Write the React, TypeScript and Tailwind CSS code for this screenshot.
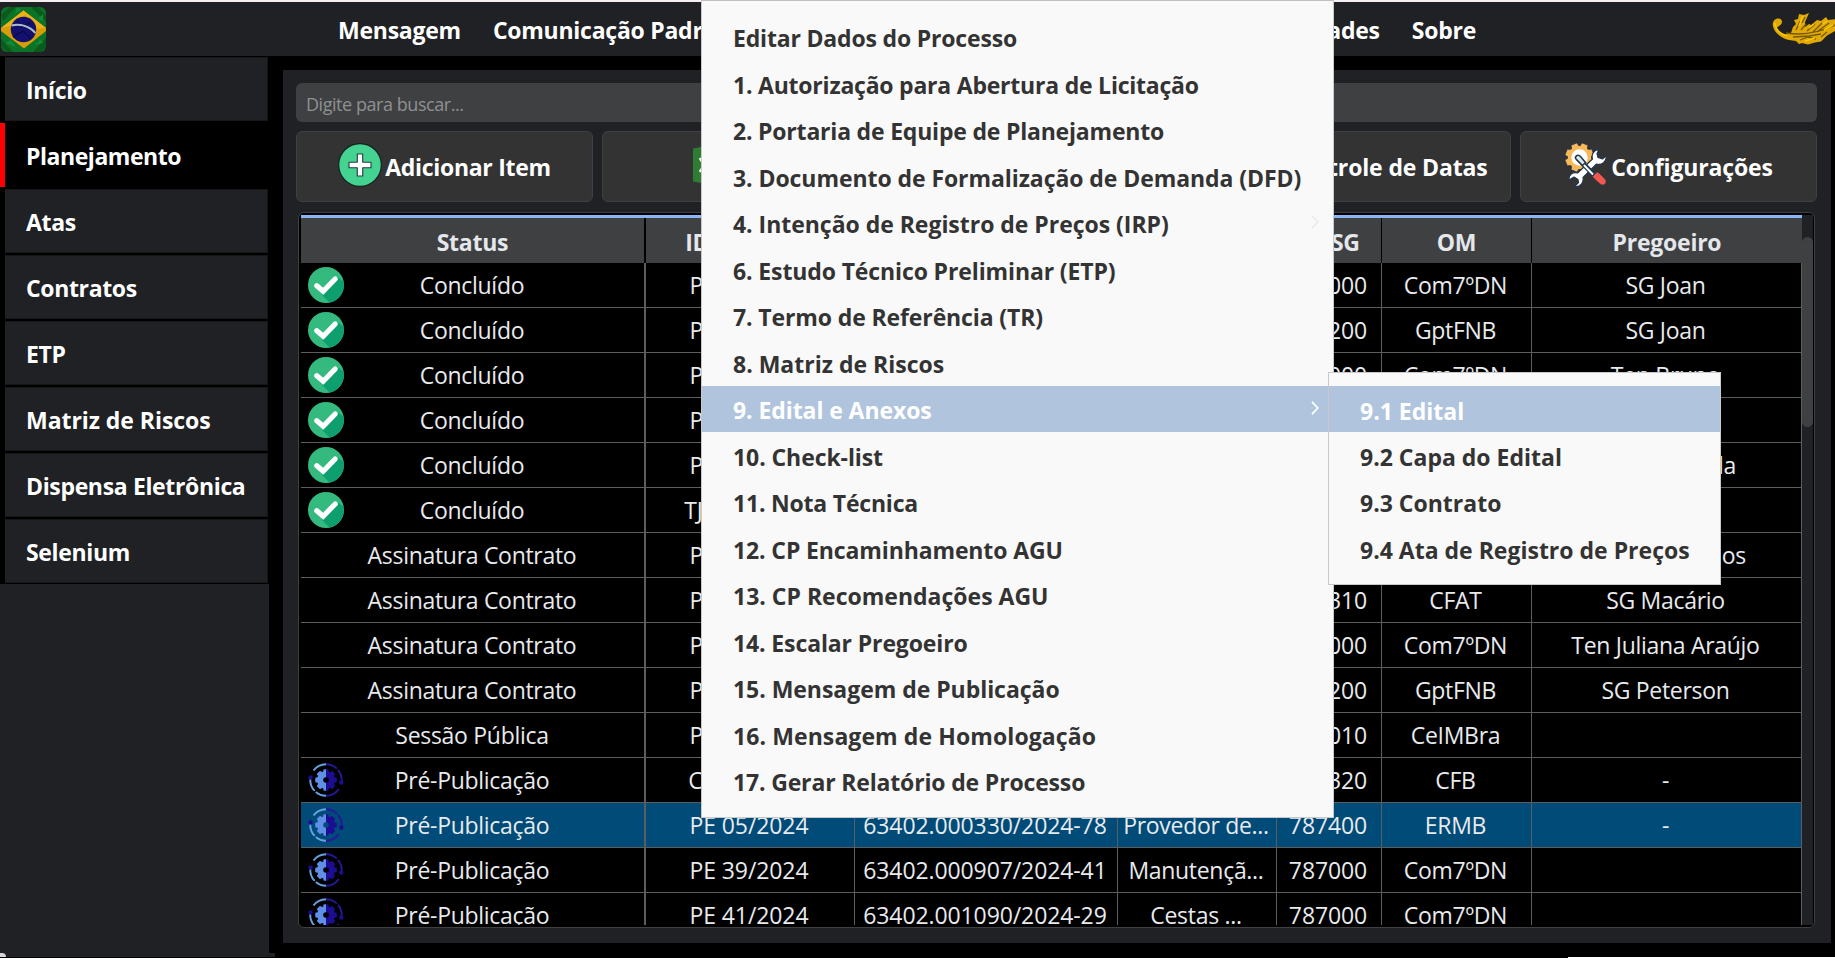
import React from "react";

const sidebar = ["Início", "Planejamento", "Atas", "Contratos", "ETP", "Matriz de Riscos", "Dispensa Eletrônica", "Selenium"];

const menu: [string, string][] = [
  ["Editar Dados do Processo", "tracking-[-0.18px]"],
  ["1. Autorização para Abertura de Licitação", "tracking-[-0.22px]"],
  ["2. Portaria de Equipe de Planejamento", "tracking-[-0.2px]"],
  ["3. Documento de Formalização de Demanda (DFD)", "tracking-[-0.07px]"],
  ["4. Intenção de Registro de Preços (IRP)", "tracking-[-0.03px]"],
  ["6. Estudo Técnico Preliminar (ETP)", "tracking-[-0.12px]"],
  ["7. Termo de Referência (TR)", "tracking-[-0.12px]"],
  ["8. Matriz de Riscos", "tracking-[0px]"],
  ["9. Edital e Anexos", "tracking-[-0.08px]"],
  ["10. Check-list", "tracking-[-0.08px]"],
  ["11. Nota Técnica", "tracking-[-0.2px]"],
  ["12. CP Encaminhamento AGU", "tracking-[-0.12px]"],
  ["13. CP Recomendações AGU", "tracking-[0px]"],
  ["14. Escalar Pregoeiro", "tracking-[-0.12px]"],
  ["15. Mensagem de Publicação", "tracking-[-0.04px]"],
  ["16. Mensagem de Homologação", "tracking-[0.09px]"],
  ["17. Gerar Relatório de Processo", "tracking-[-0.16px]"],
];

const submenu = ["9.1 Edital", "9.2 Capa do Edital", "9.3 Contrato", "9.4 Ata de Registro de Preços"];

const headers = ["Status", "ID Processo", "NUP", "Objeto", "UASG", "OM", "Pregoeiro"];

const rows: string[][] = [
  ["Concluído", "PE 01/2024", "", "", "787000", "Com7ºDN", "SG Joan"],
  ["Concluído", "PE 02/2024", "", "", "787200", "GptFNB", "SG Joan"],
  ["Concluído", "PE 03/2024", "", "", "787000", "Com7ºDN", "Ten Bruno"],
  ["Concluído", "PE 04/2024", "", "", "", "", ""],
  ["Concluído", "PE 06/2024", "", "", "", "", "Ten Manuella"],
  ["Concluído", "TJIL 07/2024", "", "", "", "", ""],
  ["Assinatura Contrato", "PE 08/2024", "", "", "", "", "Ten João Carlos"],
  ["Assinatura Contrato", "PE 09/2024", "", "", "787310", "CFAT", "SG Macário"],
  ["Assinatura Contrato", "PE 10/2024", "", "", "787000", "Com7ºDN", "Ten Juliana Araújo"],
  ["Assinatura Contrato", "PE 11/2024", "", "", "787200", "GptFNB", "SG Peterson"],
  ["Sessão Pública", "PE 12/2024", "", "", "787010", "CeIMBra", ""],
  ["Pré-Publicação", "CC 01/2024", "", "", "787320", "CFB", "-"],
  ["Pré-Publicação", "PE 05/2024", "63402.000330/2024-78", "Provedor de...", "787400", "ERMB", "-"],
  ["Pré-Publicação", "PE 39/2024", "63402.000907/2024-41", "Manutençã...", "787000", "Com7ºDN", ""],
  ["Pré-Publicação", "PE 41/2024", "63402.001090/2024-29", "Cestas ...", "787000", "Com7ºDN", ""],
];

const GRID = "grid grid-cols-[345px_209px_263px_159px_105px_150px_270px]";

function FlagIcon() {
  return (
    <svg viewBox="0 0 45 45" className="size-[45px]">
      <defs>
        <clipPath id="flag"><rect width="45" height="45" rx="6" /></clipPath>
      </defs>
      <g clipPath="url(#flag)">
        <rect width="45" height="45" fill="#0b7327" />
        <path d="M0 8 9 0h6L2 14zM30 0h7l8 9v6zM0 32l12 13H6L0 39zM45 31 32 45h8l5-5z" fill="#0a5a1c" />
        <path d="M16 0l4 3-6 4zM4 36l6-3 5 7zM34 38l6-6 2 4zM37 12l5-5v7z" fill="#12893a" />
        <path d="M22.500 3.500 45 21v3L23 41.500 0 24v-3z" fill="#d99d0a" />
        <path d="M22.500 3.500 45 21 35 22 24 8 10 19 0 21z" fill="#eab216" />
        <circle cx="22.500" cy="22.500" r="12.700" fill="#14106f" />
        <path d="M12 30l10-6 8 8M16 14l5 6 8-4" stroke="#0b0a4c" strokeWidth="1.500" fill="none" />
        <path d="M10.500 18.500c9-2 18 1 24 7.500" stroke="#a9bcc4" strokeWidth="2" fill="none" />
      </g>
    </svg>
  );
}

function DragonIcon() {
  return (
    <svg viewBox="0 0 65 34" className="h-[34px] w-[65px]" fill="none">
      <path d="M10 13.500C12 11 11 7.500 7.500 7.500 3 7.500 1 11.500 2 15.500 4 23 11 27 18 29l7 1 3 3 3-1 6 1.500 7-2 6-1 6-6 9-5V8l-8 1-2-3-5 4-4-1-6 5-2-1-4 3 0-5 4-9-5 2-5-1-1 5-4 1 2 4-3 3-2 6c-4 2-8 1.500-11-.5-2-1.500-4-3.500-3-5z" fill="#e0a906" />
      <path d="M15 22c12 2 30 1 49-8M25 19l4-9M30 19l5-6M36 20l8-7M42 21l9-9M47 20l11-8M22 26l16-1 12-2M29 29l8-3 8 2M50 26l6-5M31 12l3-6" stroke="#775a04" strokeWidth="1.300" />
      <path d="M28 15l4-10M38 17l5-4M52 13l4-3M34 30l10-3M4 12c0 6 5 11 12 13M53 19l9-5" stroke="#f8c900" strokeWidth="1.500" />
    </svg>
  );
}

function PlusIcon() {
  return (
    <svg viewBox="0 0 44 44" className="size-11 shrink-0">
      <circle cx="22" cy="22" r="21.300" fill="#44d391" stroke="#16231d" strokeWidth="1.200" />
      <path d="M19.300 11h5.400v8.300H33v5.400h-8.300V33h-5.400v-8.300H11v-5.400h8.300z" fill="#fff" stroke="#2b3a44" strokeWidth="1.100" strokeLinejoin="round" />
    </svg>
  );
}

function ExcelIcon() {
  return (
    <svg viewBox="0 0 42 42" className="size-[42px] shrink-0">
      <path d="M0 4.500 24 0v42L0 37.500z" fill="#2e7d32" />
      <path d="M24 6h17v30H24z" fill="#fff" stroke="#2e7d32" />
      <path d="M7 14l9 14M16 14 7 28" stroke="#fff" strokeWidth="3" />
    </svg>
  );
}

function CalendarIcon() {
  return (
    <svg viewBox="0 0 44 44" className="size-11 shrink-0">
      <rect x="3" y="6" width="38" height="35" rx="4" fill="#f3f6f8" />
      <path d="M3 16V10a4 4 0 0 1 4-4h30a4 4 0 0 1 4 4v6z" fill="#e5534b" />
    </svg>
  );
}

function ToolsIcon() {
  const teeth = [0, 45, 90, 135, 180, 225, 270, 315];
  return (
    <svg viewBox="0 0 44 44" className="size-11 shrink-0">
      <g transform="translate(15.500 14.500)">
        {teeth.map((a) => (
          <path key={a} d="M-3.200 -14.500h6.400l1 5h-8.400z" fill="#f9b857" stroke="#21354d" strokeWidth=".7" transform={`rotate(${a + 22.5})`} />
        ))}
        <circle r="11.600" fill="#f9b857" />
        <circle r="8.200" fill="#fff" />
      </g>
      <path d="M35 6.500c-5 0-8 5-6.500 9.500L13.500 30c-5-1.500-9 2-8.500 7l5-3 4 2.500.500 3-4 4c6 1 9.500-4 8.500-9l13.500-13.500c5 1.500 9.500-1.500 10-8.500l-4 3.500-4.500-1.500-1-4z" fill="#fff" stroke="#21354d" strokeWidth="1.200" strokeLinejoin="round" />
      <path d="M14 15.500l16 16.500" stroke="#21354d" strokeWidth="5" strokeLinecap="round" />
      <path d="M17 19l12 12.500" stroke="#fff" strokeWidth="1.900" />
      <path d="M11.500 15.500c-.5-3 3-4.500 5-2l5 6-3 3z" fill="#dfe7ee" stroke="#21354d" strokeWidth="1.500" />
      <path d="M28.500 33.500l4.500-4.500 2 1 6 6c3 3.500-1 8-5 5l-6-5.500z" fill="#f0584f" stroke="#21354d" strokeWidth=".6" />
    </svg>
  );
}

function CheckIcon() {
  return (
    <svg viewBox="0 0 36 36" className="size-9">
      <circle cx="18" cy="18" r="18" fill="#34b97f" />
      <path d="M30.500 10.500 35.500 15A18 18 0 0 1 21.500 35.600L14 28z" fill="#0d9f6e" />
      <path d="M8.800 18.800l6.400 5.400L27.200 12" stroke="#fff" strokeWidth="5.200" fill="none" strokeLinecap="round" strokeLinejoin="miter" />
    </svg>
  );
}

function GearIcon() {
  const teeth = [0, 45, 90, 135, 180, 225, 270, 315];
  const gear = (
    <>
      {teeth.map((a) => (
        <rect key={a} x="-2.600" y="-10.800" width="5.200" height="5" rx="1" transform={`rotate(${a})`} />
      ))}
      <path fillRule="evenodd" d="M0-9a9 9 0 1 1 0 18 9 9 0 1 1 0-18zM0-2.800a2.800 2.800 0 1 0 0 5.600 2.800 2.800 0 1 0 0-5.600z" />
    </>
  );
  return (
    <svg viewBox="-18 -18 36 36" className="size-9">
      <defs>
        <clipPath id="half-l"><rect x="-18" y="-18" width="18" height="36" /></clipPath>
        <clipPath id="half-r"><rect x="0" y="-18" width="18" height="36" /></clipPath>
      </defs>
      <g clipPath="url(#half-l)" fill="#5f8fe6">{gear}</g>
      <g clipPath="url(#half-r)" fill="#1c0d93">{gear}</g>
      <g fill="none" strokeWidth="1.900">
        <path d="M0-15.800A15.800 15.800 0 0 0-12.500-9.500" stroke="#66a3e0" />
        <path d="M-15.600-2A15.800 15.800 0 0 0 0 15.800" stroke="#66a3e0" strokeDasharray="14 1.500" />
        <path d="M0-15.800A15.800 15.800 0 0 1 15.600 2" stroke="#24189c" strokeDasharray="12 1.500" />
        <path d="M0 15.800A15.800 15.800 0 0 0 12.800 9" stroke="#24189c" />
      </g>
      <circle cx="-15.500" cy="-2.500" r="2.200" fill="#1c0d93" />
      <circle cx="15.300" cy="2.500" r="2.200" fill="#1c0d93" />
    </svg>
  );
}

function ToolButton({ icon, tracking = "tracking-[-0.15px]", children }: { icon?: React.ReactNode; tracking?: string; children: React.ReactNode }) {
  return (
    <button className="flex h-[71px] flex-1 items-center justify-center gap-[3px] rounded-md border border-[#3f4042] bg-[#333333] text-[23px] font-bold whitespace-nowrap text-white">
      {icon && <span className="-mt-1">{icon}</span>}
      <span className={`pt-0.5 ${tracking}`}>{children}</span>
    </button>
  );
}

function Chevron({ className }: { className: string }) {
  return (
    <svg viewBox="0 0 8 14" className={`mt-[-2px] h-3.5 w-2 ${className}`} fill="none" stroke="currentColor" strokeWidth="1.800">
      <path d="M1 .8 6.800 7 1 13.200" />
    </svg>
  );
}

export default function App() {
  return (
    <div className="relative flex h-[958px] w-[1835px] flex-col overflow-hidden bg-black font-['Open_Sans','Noto_Sans',sans-serif]">
      <div className="h-0.5 shrink-0 bg-[#f5eff2]" />
      <header className="flex h-[54px] shrink-0 items-center bg-[#202124] pl-px">
        <FlagIcon />
        <nav className="ml-[292px] flex w-[1138px] gap-8 pt-0.5 text-[23px] leading-[50px] font-bold tracking-[-0.25px] whitespace-nowrap text-white">
          <span>Mensagem</span>
          <span>Comunicação Padronizada</span>
          <span className="ml-auto">Funcionalidades</span>
          <span>Sobre</span>
        </nav>
        <div className="mr-[-1px] mb-0.5 ml-auto">
          <DragonIcon />
        </div>
      </header>

      <div className="flex min-h-0 flex-1">
        <aside className="flex w-[269px] shrink-0 flex-col bg-[#202124]">
          <ul className="flex flex-col gap-0.5 bg-black pt-px pb-px">
            {sidebar.map((s) => (
              <li
                key={s}
                className={
                  s === "Planejamento"
                    ? "flex h-16 items-center border-l-[5px] border-[#ff0000] bg-black"
                    : "mr-px ml-[5px] flex h-16 items-center border border-[#161719] border-l-[#202124] bg-[#202124]"
                }
              >
                <span className={`pt-[3px] text-[23px] font-bold text-white ${s === "Planejamento" ? "pl-[21px] tracking-[-0.45px]" : "pl-5"} ${s === "Matriz de Riscos" ? "tracking-[-0.05px]" : s === "Planejamento" ? "" : "tracking-[-0.35px]"}`}>
                  {s}
                </span>
              </li>
            ))}
          </ul>
        </aside>

        <main className="mt-3.5 ml-3.5 flex h-[873px] w-[1548px] flex-col bg-[#202124] pt-[13px] pr-3.5 pl-[13px]">
          <div className="flex h-[39px] shrink-0 items-center rounded-md bg-[#3f4042] pt-[3px] pl-2.5 text-[18px] tracking-[-0.45px] text-[#8f9092]">
            Digite para buscar...
          </div>
          <div className="mt-[9px] flex gap-[9px]">
            <ToolButton icon={<PlusIcon />} tracking="tracking-[-0.3px]">Adicionar Item</ToolButton>
            <ToolButton icon={<ExcelIcon />}>Salvar</ToolButton>
            <ToolButton>Relatório</ToolButton>
            <ToolButton icon={<CalendarIcon />}>Controle de Datas</ToolButton>
            <ToolButton icon={<ToolsIcon />}>Configurações</ToolButton>
          </div>

          <section className="mt-2.5 mr-0.5 ml-0.5 flex h-[716px] overflow-hidden rounded-md border border-[#3f4042] bg-black p-0.5 pr-px">
            <div className="w-[1501px] overflow-hidden">
              <div className={`${GRID} h-12 border-t-[3px] border-[#8ab4f8]`}>
                {headers.map((h, i) => (
                  <div
                    key={h}
                    className={`flex items-center justify-center bg-[#3f4042] pt-[3px] text-[23px] font-bold tracking-[-0.25px] text-[#e4e7eb] ${i === 0 ? "border-r-2 border-black" : i < 6 ? "border-r border-black" : ""}`}
                  >
                    {h}
                  </div>
                ))}
              </div>
              {rows.map((r, n) => (
                <div key={n} className={`${GRID} h-[45px] ${n === 12 ? "bg-[#004b78]" : ""}`}>
                  {r.map((c, i) => (
                    <div
                      key={i}
                      className={`flex items-center border-b border-[#5c5d5f] text-[23px] whitespace-nowrap text-[#e8eaed] ${i === 0 ? "border-r-2" : "border-r"} ${i === 2 || i === 4 || i === 1 ? "tracking-[-0.1px]" : "tracking-[-0.3px]"}`}
                    >
                      {i === 0 && (
                        <span className="ml-[7px] w-9">
                          {n < 6 ? <CheckIcon /> : n > 10 ? <GearIcon /> : null}
                        </span>
                      )}
                      <span className={`flex-1 text-center ${i === 0 ? "pr-11" : "pr-0.5"}`}>{c}</span>
                    </div>
                  ))}
                </div>
              ))}
            </div>
            <div className="w-[11px] bg-[#202124] pt-[22px]">
              <div className="h-[190px] rounded-md bg-[#3f4042]" />
            </div>
          </section>
        </main>
      </div>
      <div className="flex h-1 w-[275px] shrink-0 bg-[#202124]">
        <div className="w-1.5 rounded-tr-sm bg-[#d6d6d6]" />
      </div>
      <div className="ml-auto h-px w-[267px] shrink-0 bg-white" />

      <div className="absolute top-0 left-[701px] flex h-[818px] w-[633px] flex-col border border-[#c9c9c9] border-t-[#c0c0c0] bg-[#f9f9f9] py-[13px]">
        {menu.map(([label, tracking], i) => (
          <div
            key={label}
            className={`flex h-[46.470px] items-center justify-between pr-3.5 pl-[31px] text-[23px] font-bold whitespace-nowrap ${tracking} ${i === 8 ? "bg-[#b0c4de] text-white" : "text-[#333333]"}`}
          >
            <span className="pt-[3px]">{label}</span>
            {i === 4 && <Chevron className="text-[#ececec]" />}
            {i === 8 && <Chevron className="text-white" />}
          </div>
        ))}
      </div>

      <div className="absolute top-[372px] left-[1328px] flex h-[213px] w-[393px] flex-col border border-[#c9c9c9] bg-[#f9f9f9] py-[13px]">
        {submenu.map((m, i) => (
          <div
            key={m}
            className={`flex h-[46.470px] items-center pl-[31px] text-[23px] font-bold whitespace-nowrap ${i === 0 ? "bg-[#b0c4de] text-white" : "text-[#333333]"}`}
          >
            <span className="pt-1">{m}</span>
          </div>
        ))}
      </div>
    </div>
  );
}
